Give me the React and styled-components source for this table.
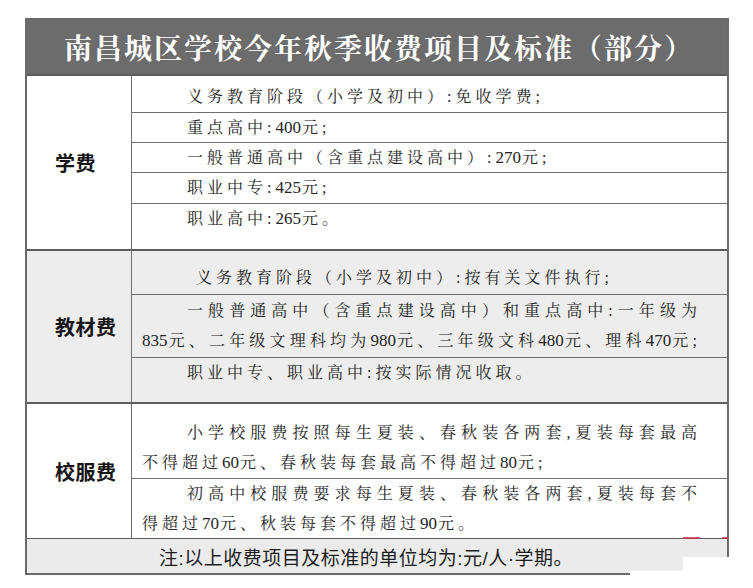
import styled, { createGlobalStyle } from "styled-components";

const Global = createGlobalStyle`
  body {
    margin: 0;
    background: #ffffff;
  }
`;

const Page = styled.div`
  position: relative;
  width: 753px;
  height: 588px;
  padding: 18px 0 0 25px;
  box-sizing: border-box;
  background: #fff;
`;

const Table = styled.div`
  width: 704px;
  border: 2px solid #6a6a6a;
  box-sizing: border-box;
  background: #fff;
`;

const Title = styled.div`
  height: 54px;
  background: #6c6c6c;
  color: #fff;
  display: flex;
  align-items: center;
  justify-content: center;
  font-family: "Noto Serif CJK SC", "Noto Sans CJK SC", serif;
  font-weight: 700;
  font-size: 28px;
  letter-spacing: 2px;
  padding-left: 4px;
`;

const Section = styled.div`
  display: grid;
  grid-template-columns: 104px 1fr;
  border-top: 2px solid #5c5c5c;
  background: ${(p) => (p.$shade ? "#ededed" : "#fff")};
`;

const Label = styled.div`
  display: flex;
  align-items: center;
  padding-left: 28px;
  font-family: "Noto Sans CJK SC", sans-serif;
  font-weight: 700;
  font-size: 20px;
  color: #151515;
  letter-spacing: 0.5px;
`;

const Cells = styled.div`
  border-left: 1px solid #707070;
`;

const Row = styled.div`
  height: ${(p) => p.$h}px;
  padding: ${(p) => p.$pt || 0}px 26px 0 10px;
  box-sizing: border-box;
  border-top: ${(p) => (p.$first ? "none" : "1px solid #707070")};
  font-family: "Liberation Serif", "Noto Serif CJK SC", "Noto Sans CJK SC", serif;
  font-size: 16px;
  line-height: 30px;
  letter-spacing: 4px;
  color: #242424;
`;

const Line = styled.div`
  padding-left: ${(p) => p.$indent || 0}px;
  text-align: ${(p) => (p.$justify ? "justify" : "left")};
  text-align-last: ${(p) => (p.$justify ? "justify" : "auto")};
`;

const Num = styled.span`
  font-family: "Liberation Serif", serif;
  font-size: 17px;
  letter-spacing: 0;
  margin-right: 1px;
`;

const Note = styled.div`
  height: 34px;
  border-top: 1px solid #5c5c5c;
  background: #ebebeb;
  display: flex;
  align-items: center;
  justify-content: center;
  padding-right: 22px;
  font-family: "Liberation Sans", "Noto Sans CJK SC", sans-serif;
  font-size: 19px;
  letter-spacing: 0.5px;
  color: #1e1e1e;
`;

const Patch = styled.div`
  position: absolute;
  background: #fff;
  left: ${(p) => p.$x}px;
  top: ${(p) => p.$y}px;
  width: ${(p) => p.$w}px;
  height: ${(p) => p.$hh}px;
`;

const Mark = styled.div`
  position: absolute;
  background: #c8324a;
  height: 2px;
  left: ${(p) => p.$x}px;
  top: 537px;
  width: ${(p) => p.$w}px;
  opacity: 0.8;
`;

const fmt = (s) =>
  s.split(/(\d+)/).map((part, i) =>
    /^\d+$/.test(part) ? <Num key={i}>{part}</Num> : part
  );

const sections = [
  {
    label: "学费",
    rows: [
      { h: 36, pt: 6, lines: [{ t: "义务教育阶段（小学及初中）:免收学费;", indent: 45 }] },
      { h: 30, lines: [{ t: "重点高中:400元;", indent: 45 }] },
      { h: 30, lines: [{ t: "一般普通高中（含重点建设高中）:270元;", indent: 45 }] },
      { h: 31, lines: [{ t: "职业中专:425元;", indent: 45 }] },
      { h: 46, lines: [{ t: "职业高中:265元。", indent: 45 }] },
    ],
  },
  {
    label: "教材费",
    shade: true,
    rows: [
      { h: 43, pt: 12, lines: [{ t: "义务教育阶段（小学及初中）:按有关文件执行;", indent: 54 }] },
      {
        h: 63,
        pt: 1,
        lines: [
          { t: "一般普通高中（含重点建设高中）和重点高中:一年级为", indent: 45, justify: true },
          { t: "835元、二年级文理科均为980元、三年级文科480元、理科470元;", justify: true },
        ],
      },
      { h: 45, lines: [{ t: "职业中专、职业高中:按实际情况收取。", indent: 45 }] },
    ],
  },
  {
    label: "校服费",
    rows: [
      {
        h: 74,
        pt: 14,
        lines: [
          { t: "小学校服费按照每生夏装、春秋装各两套,夏装每套最高", indent: 45, justify: true },
          { t: "不得超过60元、春秋装每套最高不得超过80元;" },
        ],
      },
      {
        h: 60,
        lines: [
          { t: "初高中校服费要求每生夏装、春秋装各两套,夏装每套不", indent: 45, justify: true },
          { t: "得超过70元、秋装每套不得超过90元。" },
        ],
      },
    ],
  },
];

export default function App() {
  return (
    <Page>
      <Global />
      <Table>
        <Title>南昌城区学校今年秋季收费项目及标准（部分）</Title>
        {sections.map((sec) => (
          <Section key={sec.label} $shade={sec.shade}>
            <Label>{sec.label}</Label>
            <Cells>
              {sec.rows.map((row, i) => (
                <Row key={i} $h={row.h} $pt={row.pt} $first={i === 0}>
                  {row.lines.map((ln, j) => (
                    <Line key={j} $indent={ln.indent} $justify={ln.justify}>
                      {fmt(ln.t)}
                    </Line>
                  ))}
                </Row>
              ))}
            </Cells>
          </Section>
        ))}
        <Note>注:以上收费项目及标准的单位均为:元/人·学期。</Note>
      </Table>
      <Patch $x={683} $y={557} $w={70} $hh={31} />
      <Patch $x={630} $y={571} $w={60} $hh={17} />
      <Mark $x={683} $w={17} />
      <Mark $x={722} $w={6} />
    </Page>
  );
}
